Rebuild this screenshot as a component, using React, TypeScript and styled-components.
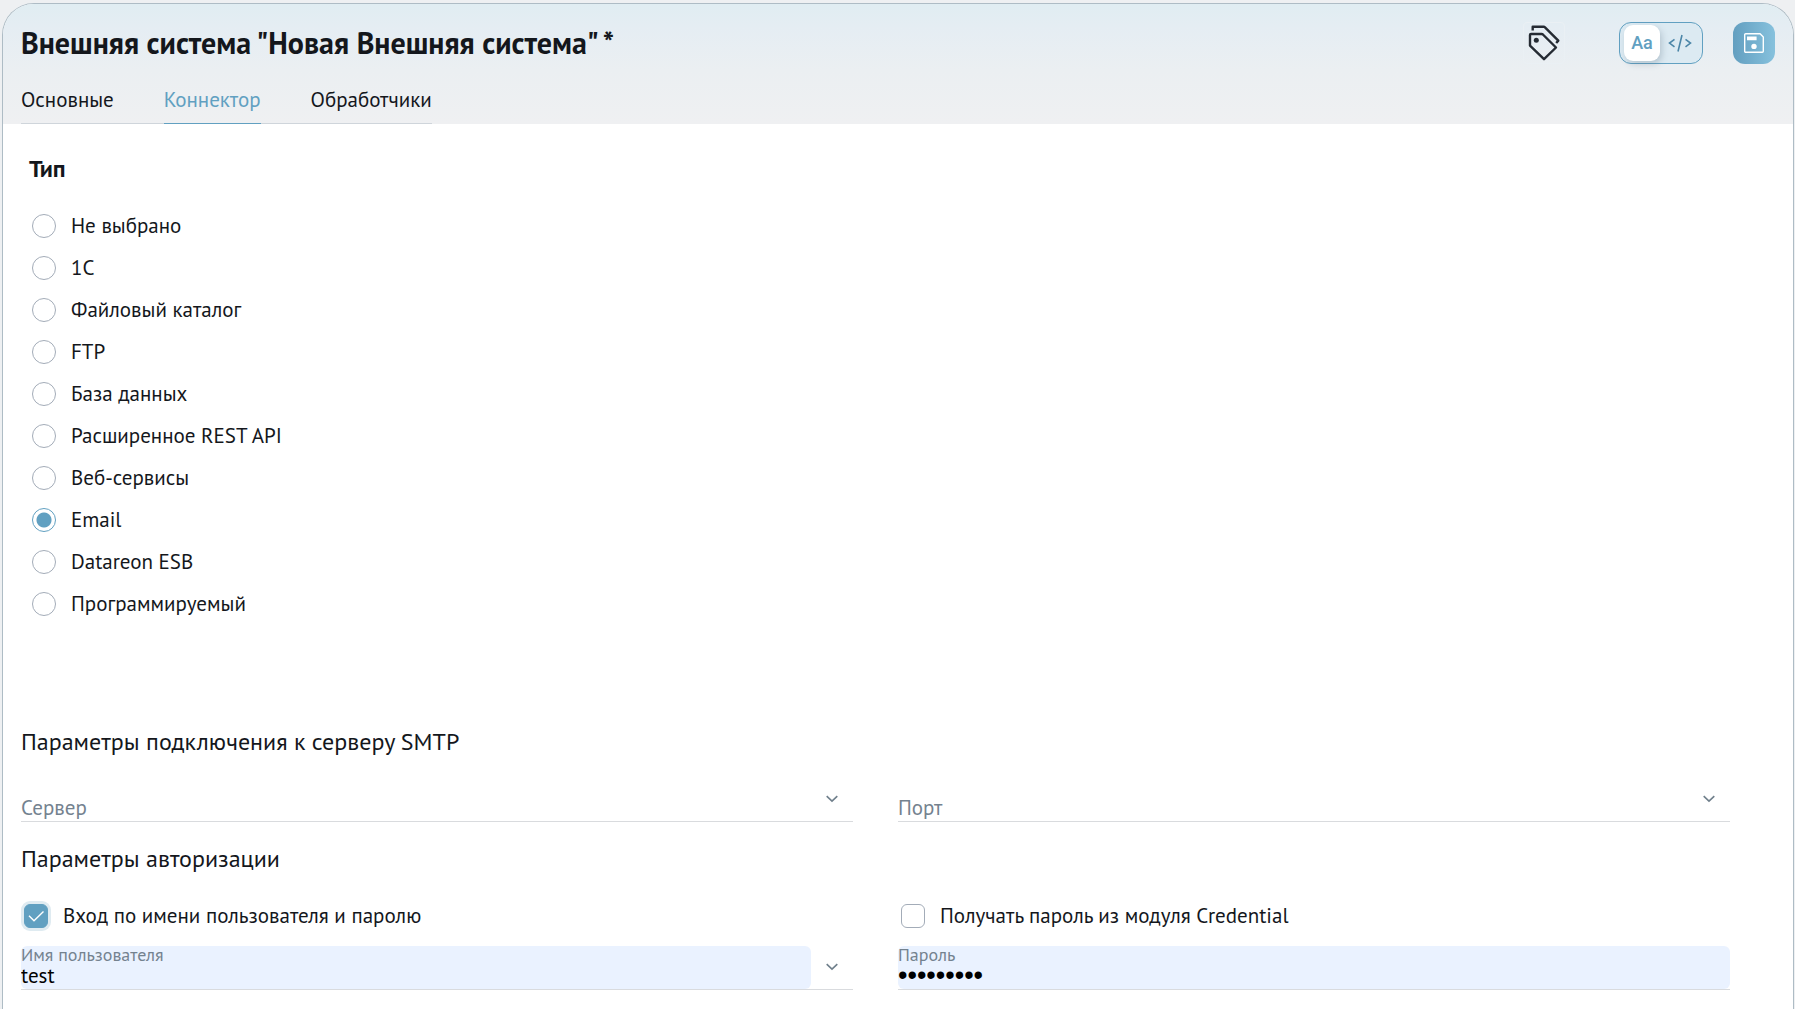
import React, { useState } from "react";
import styled, { createGlobalStyle } from "styled-components";

const color = {
  text: "#14171c",
  accent: "#61a0c1",
  muted: "#74828f",
  control: "#a3acb8",
  line: "#d9dbde",
  autofill: "#eaf2ff",
};

const GlobalStyle = createGlobalStyle`
  *, *::before, *::after { box-sizing: border-box; }
  body {
    margin: 0;
    background: #eef0f2;
    color: ${color.text};
    font: 400 21px/24px "PT Sans", "Noto Sans", sans-serif;
  }
  button, input { font: inherit; color: inherit; }
  h1, h2, h3, fieldset { margin: 0; padding: 0; border: 0; }
`;

const Page = styled.div`
  height: 100vh;
  padding: 3px 1px 0 2px;
  overflow: hidden;
`;

const Panel = styled.main`
  height: 100%;
  overflow: hidden;
  background: #fff;
  border: 1px solid #aebcc5;
  border-bottom: 0;
  border-radius: 32px 32px 0 0;
`;

const Header = styled.header`
  padding: 18px 18px 0;
  background: linear-gradient(180deg, #e0edf2 0%, #e5edf3 20%, #ebeff2 55%, #eff0f2 100%);
`;

const TitleRow = styled.div`
  display: flex;
  align-items: center;
`;

const Title = styled.h1`
  flex: 1;
  font-size: 30px;
  line-height: 42px;
  font-weight: 700;
`;

const IconButton = styled.button<{ $filled?: boolean }>`
  width: 42px;
  height: 42px;
  padding: 0;
  border: ${(p) => (p.$filled ? 0 : "1px solid #eaf0f4")};
  border-radius: ${(p) => (p.$filled ? 12 : 4)}px;
  background: ${(p) => (p.$filled ? "linear-gradient(90deg, #639fc0, #86c1dd)" : "none")};
  display: grid;
  place-items: center;
  cursor: pointer;
`;

const ViewToggle = styled.div`
  display: flex;
  align-items: center;
  justify-content: space-between;
  width: 84px;
  height: 42px;
  margin: 0 30px 0 54px;
  padding: 0 4px;
  border: 1px solid ${color.accent};
  border-radius: 12px;
  background: #dceaf2;
`;

const ToggleOption = styled.button<{ $active: boolean }>`
  display: grid;
  place-items: center;
  width: 36px;
  height: 36px;
  padding: 0;
  border: 0;
  border-radius: 9px;
  background: ${(p) => (p.$active ? "#fff" : "none")};
  box-shadow: ${(p) => (p.$active ? "2px 3px 6px rgba(70, 90, 110, 0.25)" : "none")};
  color: ${color.accent};
  font: 500 18px/24px Roboto, sans-serif;
  cursor: pointer;
`;

const Tabs = styled.nav`
  display: inline-flex;
  gap: 50px;
  height: 48px;
  margin-top: 12px;
  vertical-align: top;
  box-shadow: inset 0 -1px #cfd5db;
`;

const Tab = styled.a<{ $active: boolean }>`
  padding-top: 12px;
  color: ${(p) => (p.$active ? color.accent : color.text)};
  border-bottom: 1px solid ${(p) => (p.$active ? color.accent : "transparent")};
  text-decoration: none;
`;

const Content = styled.form`
  padding: 30px 63px 0 18px;
`;

const TypeGroup = styled.fieldset`
  padding-left: 8px;
`;

const Legend = styled.legend`
  padding: 0;
  margin-bottom: 21px;
  font-size: 24px;
  line-height: 30px;
  font-weight: 700;
`;

const Choice = styled.label`
  display: flex;
  align-items: center;
  gap: 15px;
  height: 42px;
  padding-left: 3px;
`;

const Radio = styled.input.attrs({ type: "radio" })`
  appearance: none;
  width: 24px;
  height: 24px;
  margin: 0;
  border: 1px solid ${color.control};
  border-radius: 50%;
  background: #fff;
  &:checked {
    border-color: ${color.accent};
    background: radial-gradient(circle, ${color.accent} 7px, #fff 8px);
  }
`;

const CheckHolder = styled.span`
  display: grid;
  & > * { grid-area: 1 / 1; }
  svg { pointer-events: none; }
`;

const Checkbox = styled.input.attrs({ type: "checkbox" })`
  appearance: none;
  width: 24px;
  height: 24px;
  margin: 0;
  border: 1px solid ${color.control};
  border-radius: 6px;
  background: #fff;
  &:checked {
    border-color: ${color.accent};
    background: ${color.accent};
    box-shadow: 0 0 0 3px #dfebf1;
  }
`;

const SectionTitle = styled.h2<{ $top: number }>`
  margin-top: ${(p) => p.$top}px;
  font-size: 24px;
  line-height: 32px;
  font-weight: 400;
`;

const Grid = styled.div`
  display: grid;
  grid-template-columns: 1fr 1fr;
  column-gap: 45px;
  row-gap: 9px;
  margin-top: 20px;
`;

const FieldBox = styled.div`
  position: relative;
  display: flex;
  height: 44px;
  border-bottom: 1px solid ${color.line};
`;

const FieldLabel = styled.label<{ $floating: boolean }>`
  position: absolute;
  left: 0;
  top: ${(p) => (p.$floating ? -1 : 18)}px;
  font-size: ${(p) => (p.$floating ? 18 : 21)}px;
  line-height: ${(p) => (p.$floating ? 20 : 24)}px;
  color: ${color.muted};
  pointer-events: none;
`;

const FieldInput = styled.input<{ $filled: boolean }>`
  flex: 1;
  min-width: 0;
  height: 43px;
  padding: 16px 0 0;
  border: 0;
  border-radius: 6px;
  outline: 0;
  background: ${(p) => (p.$filled ? color.autofill : "transparent")};
  color: #000;
  &[type="password"] { font: 27px/24px "Liberation Sans", sans-serif; }
`;

const DropButton = styled.button`
  width: 42px;
  height: 42px;
  padding: 0;
  border: 0;
  background: none;
  display: grid;
  place-items: center;
`;

const TagsIcon = () => (
  <svg width="40" height="40" viewBox="1 1 40 40" fill="none" stroke="#252b33" strokeWidth="2.4" strokeLinejoin="round">
    <path d="M7 13a1 1 0 0 1 1-1h10.6a2 2 0 0 1 1.3.5L33 25.5 21 37.2 7 23.6z" />
    <path d="M9.7 8.6V4.8h11a2 2 0 0 1 1.3.5L35.3 18.6 33.2 21" />
    <circle cx="13.3" cy="18.3" r="2.5" fill="#252b33" stroke="none" />
  </svg>
);

const CodeIcon = () => (
  <svg width="24" height="20" viewBox="0 0 24 20" fill="none" stroke="#4c86a8" strokeWidth="1.6">
    <path d="M6.5 6.3 1.5 10.1l5 3.8M17.5 6.3l5 3.8-5 3.8M14 2 10 18.5" />
  </svg>
);

const SaveIcon = () => (
  <svg width="20" height="20" viewBox="0 0 20 20" fill="none" stroke="#fff" strokeWidth="1.4" strokeLinejoin="round">
    <path d="M1.7.7h14.4l3.2 3.2v14.4a1 1 0 0 1-1 1H1.7a1 1 0 0 1-1-1V1.7a1 1 0 0 1 1-1z" />
    <path d="M3 3.5h9.6v3.8H3z" fill="#fff" stroke="none" />
    <circle cx="10" cy="13.4" r="2.7" fill="#fff" stroke="none" />
  </svg>
);

const ChevronIcon = () => (
  <svg width="12" height="8" viewBox="0 0 12 8" fill="none" stroke="#6f7f8b" strokeWidth="1.6">
    <path d="m.7 1.2 5.3 5 5.3-5" />
  </svg>
);

const CheckIcon = () => (
  <svg width="24" height="24" viewBox="0 0 24 24" fill="none" stroke="#fff" strokeWidth="1.4">
    <path d="m5 11.8 5 5 9.5-9.3" />
  </svg>
);

type FieldProps = { id: string; label: string; initial?: string; type?: string; dropdown?: boolean };

function Field({ id, label, initial = "", type = "text", dropdown }: FieldProps) {
  const [value, setValue] = useState(initial);
  const filled = value !== "";
  return (
    <FieldBox>
      <FieldInput
        id={id}
        type={type}
        value={value}
        $filled={filled}
        autoComplete="off"
        onChange={(e) => setValue(e.target.value)}
      />
      <FieldLabel htmlFor={id} $floating={filled}>{label}</FieldLabel>
      {dropdown && (
        <DropButton type="button" aria-label={label}>
          <ChevronIcon />
        </DropButton>
      )}
    </FieldBox>
  );
}

function CheckField({ label, initial }: { label: string; initial: boolean }) {
  const [checked, setChecked] = useState(initial);
  return (
    <Choice>
      <CheckHolder>
        <Checkbox checked={checked} onChange={(e) => setChecked(e.target.checked)} />
        {checked && <CheckIcon />}
      </CheckHolder>
      {label}
    </Choice>
  );
}

const tabs = ["Основные", "Коннектор", "Обработчики"];

const types = [
  "Не выбрано",
  "1С",
  "Файловый каталог",
  "FTP",
  "База данных",
  "Расширенное REST API",
  "Веб-сервисы",
  "Email",
  "Datareon ESB",
  "Программируемый",
];

export default function App() {
  const [tab, setTab] = useState("Коннектор");
  const [type, setType] = useState("Email");
  const [view, setView] = useState<"text" | "code">("text");

  return (
    <Page>
      <GlobalStyle />
      <Panel>
        <Header>
          <TitleRow>
            <Title>Внешняя система "Новая Внешняя система" *</Title>
            <IconButton type="button" aria-label="Метки">
              <TagsIcon />
            </IconButton>
            <ViewToggle>
              <ToggleOption type="button" $active={view === "text"} onClick={() => setView("text")}>
                Aa
              </ToggleOption>
              <ToggleOption type="button" aria-label="Код" $active={view === "code"} onClick={() => setView("code")}>
                <CodeIcon />
              </ToggleOption>
            </ViewToggle>
            <IconButton type="button" aria-label="Сохранить" $filled>
              <SaveIcon />
            </IconButton>
          </TitleRow>
          <Tabs>
            {tabs.map((name) => (
              <Tab key={name} href="#" $active={name === tab} onClick={() => setTab(name)}>
                {name}
              </Tab>
            ))}
          </Tabs>
        </Header>
        <Content>
          <TypeGroup>
            <Legend>Тип</Legend>
            {types.map((name) => (
              <Choice key={name}>
                <Radio name="type" checked={name === type} onChange={() => setType(name)} />
                {name}
              </Choice>
            ))}
          </TypeGroup>
          <SectionTitle $top={101}>Параметры подключения к серверу SMTP</SectionTitle>
          <Grid>
            <Field id="server" label="Сервер" dropdown />
            <Field id="port" label="Порт" dropdown />
          </Grid>
          <SectionTitle $top={21}>Параметры авторизации</SectionTitle>
          <Grid>
            <CheckField label="Вход по имени пользователя и паролю" initial />
            <CheckField label="Получать пароль из модуля Credential" initial={false} />
            <Field id="login" label="Имя пользователя" initial="test" dropdown />
            <Field id="password" label="Пароль" type="password" initial="secret123" />
          </Grid>
        </Content>
      </Panel>
    </Page>
  );
}
